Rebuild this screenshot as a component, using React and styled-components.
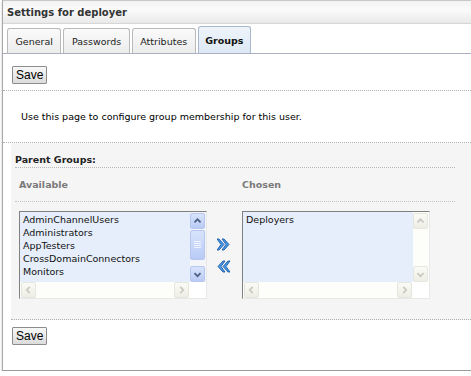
import React from 'react';
import styled, { createGlobalStyle, css } from 'styled-components';

const GlobalStyle = createGlobalStyle`
  html, body {
    margin: 0;
    padding: 0;
    background: #fff;
  }
  body {
    font-family: "DejaVu Sans", Tahoma, sans-serif;
    font-size: 9.5px;
    color: #000;
  }
`;

const Panel = styled.div`
  margin-left: 2px;
  width: 480px;
  height: 370px;
  border-left: 1px solid #a8a8a8;
  border-bottom: 1px solid #9a9a9a;
  box-shadow: 0 2px 2px rgba(0, 0, 0, 0.25);
  display: flex;
  flex-direction: column;
`;

const TitleBar = styled.div`
  height: 22px;
  border-top: 1px solid #c8c8c8;
  border-bottom: 1px solid #d6d6d6;
  background: linear-gradient(#f3f3f3, #fafafa 40%, #e9e9e9);
  font-weight: bold;
  font-size: 10px;
  color: #333;
  padding-left: 4px;
  display: flex;
  align-items: center;
`;

const TabBar = styled.div`
  display: flex;
  align-items: flex-end;
  gap: 2px;
  padding: 0 0 0 4px;
  height: 29px;
  border-bottom: 1px solid #a9b1c0;
`;

const Tab = styled.div`
  height: 24px;
  padding: 0 7.5px;
  display: flex;
  align-items: center;
  border: 1px solid #b9b9b9;
  border-bottom: none;
  border-radius: 3px 3px 0 0;
  background: linear-gradient(#fafafa, #ececec);
  color: #222;
  ${(p) =>
    p.$active &&
    css`
      height: 26px;
      padding: 0 6.5px;
      font-weight: bold;
      color: #111;
      border-color: #a9b8cc;
      background: linear-gradient(#eef4fb, #dde8f4);
    `}
`;

const Section = styled.div`
  padding: ${(p) => p.$pad || '0'};
  border-bottom: ${(p) => (p.$dotted ? '1px dotted #b0b0b0' : 'none')};
`;

const Button = styled.button`
  font-family: "Liberation Sans", Arial, sans-serif;
  font-size: 12px;
  height: 18px;
  padding: 0 3px;
  border: 1px solid #8c8c8c;
  border-radius: 1px;
  background: linear-gradient(#f8f8f8, #dcdcdc);
  color: #000;
  display: block;
`;

const Intro = styled.p`
  margin: 0;
  padding: 20px 0 20px 18px;
  border-bottom: 1px dotted #b0b0b0;
`;

const GreyBox = styled.div`
  margin-left: 8px;
  background: #f5f5f5;
  padding: 11px 0 20px 4px;
  border-bottom: 1px dotted #b0b0b0;
`;

const Inner = styled.div`
  width: 440px;
`;

const GroupTitle = styled.div`
  font-weight: bold;
  color: #222;
  padding-bottom: 2px;
  border-bottom: 1px dotted #b8b8b8;
`;

const Columns = styled.div`
  display: grid;
  grid-template-columns: 188px 35px 188px;
  align-items: center;
  padding-left: 4px;
`;

const ColHead = styled.div`
  font-weight: bold;
  color: #7a7a7a;
  padding: 11px 0 11px;
`;

const HeadRow = styled.div`
  display: grid;
  grid-template-columns: 223px 1fr;
  padding-left: 4px;
  border-bottom: 1px dotted #c4c4c4;
  margin-bottom: 9px;
`;

const ListBox = styled.div`
  width: 188px;
  height: 88px;
  box-sizing: border-box;
  border: 1px solid;
  border-color: #808080 #e8e8e8 #e8e8e8 #808080;
  box-shadow: inset 1px 1px 0 #c0c0c0;
  background: #fff;
  display: grid;
  grid-template-columns: 1fr 16px;
  grid-template-rows: 1fr 16px;
`;

const Items = styled.div`
  background: #e6eefb;
  padding: 1px 3px;
  line-height: 13px;
  color: #111;
  overflow: hidden;
  white-space: nowrap;
`;

const VScroll = styled.div`
  display: flex;
  flex-direction: column;
  justify-content: space-between;
  background: ${(p) => (p.$disabled ? '#fdfdfa' : '#f3f5f9')};
  padding-top: 1px;
`;

const HScroll = styled.div`
  display: flex;
  justify-content: space-between;
  background: ${(p) => (p.$disabled ? '#fdfdfa' : '#fbfbf7')};
  grid-column: 1 / 2;
  padding: 0 1px;
`;

const Corner = styled.div`
  background: #fff;
`;

const ScrollBtn = styled.div`
  width: 15px;
  height: 16px;
  box-sizing: border-box;
  border-radius: 2px;
  display: flex;
  align-items: center;
  justify-content: center;
  ${(p) =>
    p.$disabled
      ? css`
          border: 1px solid #e6e6e0;
          background: linear-gradient(#fbfbf6, #eeede5);
        `
      : css`
          border: 1px solid #b6c6ef;
          background: linear-gradient(#d8e3fc, #b9cbf5);
        `}
`;

const Thumb = styled(ScrollBtn)`
  height: 30px;
  margin-top: 1px;
  flex: none;
`;

const Track = styled.div`
  flex: 1;
  display: flex;
  flex-direction: column;
`;

const Movers = styled.div`
  display: flex;
  flex-direction: column;
  align-items: flex-start;
  gap: 9px;
  padding-left: 10px;
`;

const Footer = styled.div`
  padding: 7px 0 0 9px;
`;

function Chevron({ dir, color }) {
  const d = {
    up: 'M4 9 L7.5 5.5 L11 9',
    down: 'M4 6.5 L7.5 10 L11 6.5',
    left: 'M9 4 L5.5 7.5 L9 11',
    right: 'M6 4 L9.5 7.5 L6 11',
  }[dir];
  return (
    <svg width="13" height="14" viewBox="0 0 15 15">
      <path d={d} fill="none" stroke={color} strokeWidth="2" />
    </svg>
  );
}

function Grip() {
  return (
    <svg width="7" height="8" viewBox="0 0 7 8">
      {[1, 3, 5, 7].map((y) => (
        <line key={y} x1="0" x2="7" y1={y - 0.5} y2={y - 0.5} stroke="#eef3ff" strokeWidth="1" />
      ))}
    </svg>
  );
}

function Mover({ left }) {
  const p = left
    ? 'M6 1 L1 6.5 L6 12 L8 12 L4 6.5 L8 1 Z M11 1 L6 6.5 L11 12 L13 12 L9 6.5 L13 1 Z'
    : 'M2 1 L7 6.5 L2 12 L0 12 L4 6.5 L0 1 Z M7 1 L12 6.5 L7 12 L5 12 L9 6.5 L5 1 Z';
  return (
    <svg width="13" height="13" viewBox="0 0 13 13">
      <path d={p} fill="#4a9be6" stroke="#1f5aa8" strokeWidth="0.9" strokeLinejoin="round" />
    </svg>
  );
}

function List({ items, disabled }) {
  const arrow = disabled ? '#c9c9c0' : '#4d6185';
  return (
    <ListBox>
      <Items>
        {items.map((i) => (
          <div key={i}>{i}</div>
        ))}
      </Items>
      <VScroll $disabled={disabled}>
        <ScrollBtn $disabled={disabled}>
          <Chevron dir="up" color={arrow} />
        </ScrollBtn>
        {!disabled && (
          <Track>
            <Thumb>
              <Grip />
            </Thumb>
          </Track>
        )}
        <ScrollBtn $disabled={disabled}>
          <Chevron dir="down" color={arrow} />
        </ScrollBtn>
      </VScroll>
      <HScroll $disabled>
        <ScrollBtn $disabled>
          <Chevron dir="left" color="#c9c9c0" />
        </ScrollBtn>
        <ScrollBtn $disabled>
          <Chevron dir="right" color="#c9c9c0" />
        </ScrollBtn>
      </HScroll>
      <Corner />
    </ListBox>
  );
}

const available = ['AdminChannelUsers', 'Administrators', 'AppTesters', 'CrossDomainConnectors', 'Monitors'];

export default function App() {
  return (
    <>
      <GlobalStyle />
      <Panel>
        <TitleBar>Settings for deployer</TitleBar>
        <TabBar>
          <Tab>General</Tab>
          <Tab>Passwords</Tab>
          <Tab>Attributes</Tab>
          <Tab $active>Groups</Tab>
        </TabBar>
        <Section $pad="12px 0 6px 9px" $dotted>
          <Button>Save</Button>
        </Section>
        <Intro>Use this page to configure group membership for this user.</Intro>
        <GreyBox>
          <Inner>
            <GroupTitle>Parent Groups:</GroupTitle>
            <HeadRow>
              <ColHead>Available</ColHead>
              <ColHead>Chosen</ColHead>
            </HeadRow>
            <Columns>
              <List items={available} />
              <Movers>
                <Mover />
                <Mover left />
              </Movers>
              <List items={['Deployers']} disabled />
            </Columns>
          </Inner>
        </GreyBox>
        <Footer>
          <Button>Save</Button>
        </Footer>
      </Panel>
    </>
  );
}
